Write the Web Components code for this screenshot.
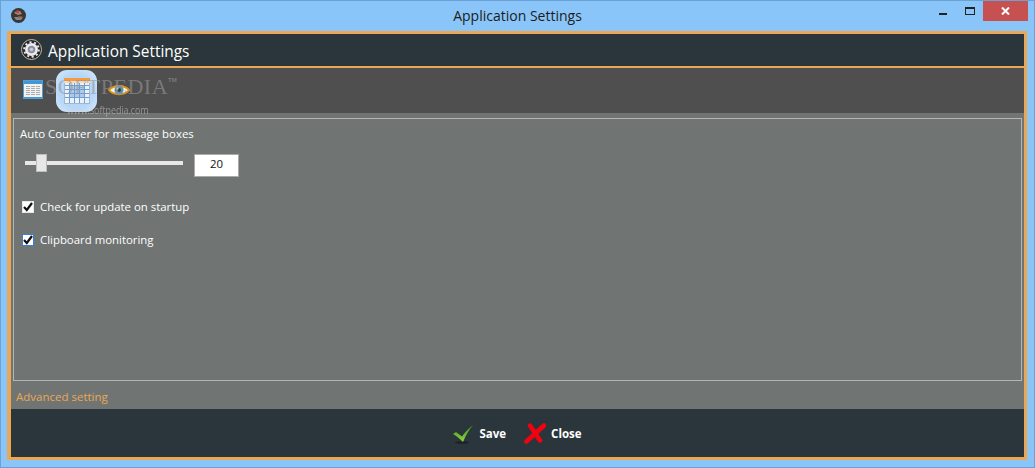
<!DOCTYPE html>
<html>
<head>
<meta charset="utf-8">
<title>Application Settings</title>
<style>
html, body { margin: 0; padding: 0; width: 1035px; height: 468px; overflow: hidden; }
body { font-family: "Open Sans", "Liberation Sans", sans-serif; }
</style>
</head>
<body>
<script>
class AppTitlebar extends HTMLElement {
    constructor() {
        super();
        this.attachShadow({ mode: "open" }).innerHTML = `
            <style>
                :host { display: grid; grid-template-columns: 1fr auto 1fr; height: 30px; color: #1c1c1c; }
                .logo { margin: 7px 0 0 10px; width: 15px; height: 15px; display: block; }
                .title { font: 14px/29px "Open Sans", "Liberation Sans", sans-serif; }
                .buttons { display: flex; align-items: flex-start; justify-content: flex-end; }
                .min { width: 8px; height: 2px; background: #222; margin: 12px 18px 0 0; }
                .max { width: 10px; height: 8px; box-sizing: border-box; border: 1px solid #222; border-top-width: 2px; margin: 6px 8px 0 0; }
                .close { width: 45px; height: 20px; background: #c75050; display: flex; justify-content: center; align-items: center; margin-right: 6px; }
            </style>
            <div>
                <svg class="logo" viewBox="0 0 15 15">
                    <circle cx="7.500" cy="7.500" r="7.500" fill="#3a3631"/>
                    <path d="M3 5L6 2.500L9 3L11 6L7 7Z" fill="#a9807a"/>
                    <rect x="5" y="3" width="3" height="2" fill="#c0453f"/>
                    <path d="M3 9H12L10 12H5Z" fill="#7a8a94"/>
                    <rect x="7" y="8" width="4" height="1.500" fill="#a8442f"/>
                </svg>
            </div>
            <div class="title"><slot></slot></div>
            <div class="buttons">
                <div class="min"></div>
                <div class="max"></div>
                <div class="close">
                    <svg width="9" height="8" viewBox="0 0 9 8"><path d="M1 .5L8 7.500M8 .5L1 7.500" stroke="#fff" stroke-width="2" fill="none"/></svg>
                </div>
            </div>
        `;
    }
}

class AppHeader extends HTMLElement {
    constructor() {
        super();
        this.attachShadow({ mode: "open" }).innerHTML = `
            <style>
                :host { display: flex; align-items: center; height: 32px; background: #2a363b; border-bottom: 2px solid #eaa854; color: #fff; padding-left: 10px; gap: 6px; font-size: 15.400px; }
                span { margin-top: 2px; }
                svg { margin-top: -1px; }
            </style>
            <svg width="21" height="21" viewBox="0 0 21 21">
                <circle cx="10.500" cy="10.500" r="10" fill="#1f2a2e" stroke="#d9b98c"/>
                <circle cx="10.500" cy="10.500" r="6.500" fill="#ecebf4"/>
                <circle cx="10.500" cy="10.500" r="7.300" fill="none" stroke="#e4e3ee" stroke-width="2" stroke-dasharray="2.100 2.490"/>
                <circle cx="10.500" cy="10.500" r="3.800" fill="#8f8f9c"/>
                <circle cx="10.500" cy="10.500" r="1.800" fill="#c9c9d4"/>
            </svg>
            <span><slot></slot></span>
        `;
    }
}

class AppToolbar extends HTMLElement {
    constructor() {
        super();
        this.attachShadow({ mode: "open" }).innerHTML = `
            <style>
                :host { display: flex; align-items: center; height: 45px; background: #4f4f4f; padding-left: 12px; position: relative; }
                svg { display: block; }
                .t1 { margin-top: -2px; }
                .t2 { width: 41px; height: 42px; margin-left: 13px; border-radius: 11px; background: radial-gradient(circle, #a9cff5 0, #b8d8f8 60%, #dcecfb 100%); display: flex; align-items: center; justify-content: center; filter: blur(.4px); }
                .t3 { margin: -2px 0 0 11px; filter: blur(.2px); }
                .mark { position: absolute; left: 34px; top: 4px; color: rgba(150,150,150,.6); font: 22px/30px "Liberation Serif", serif; letter-spacing: .5px; white-space: nowrap; }
                .tm { position: absolute; left: 157px; top: 8px; color: rgba(205,205,205,.5); font: 6px/8px "Liberation Sans", sans-serif; }
                .url { position: absolute; left: 56px; top: 36px; color: rgba(205,205,205,.55); font: 10px/12px "Open Sans", sans-serif; white-space: nowrap; transform: scaleX(.885); transform-origin: left; }
            </style>
            <svg class="t1" width="20" height="19" viewBox="0 0 20 19">
                <rect x="0.500" y="0.500" width="19" height="18" fill="#f2f2f0" stroke="#4f9fd8"/>
                <rect x="1" y="1" width="18" height="3" fill="#3f97d6"/>
                <g fill="#a9adaf">
                    <rect x="3" y="6" width="14" height="1"/><rect x="3" y="8" width="14" height="1"/>
                    <rect x="3" y="10" width="14" height="1"/><rect x="3" y="12" width="14" height="1"/><rect x="3" y="14" width="14" height="1"/>
                </g>
                <g fill="#f2f2f0"><rect x="7" y="5" width="1" height="11"/><rect x="12" y="5" width="1" height="11"/></g>
                <rect x="1" y="17" width="18" height="1" fill="#3f97d6"/>
            </svg>
            <div class="t2">
                <svg width="26" height="26" viewBox="0 0 26 26">
                    <rect x="0.500" y="0.500" width="25" height="25" fill="#eaf1f8" stroke="#9fb8d0"/>
                    <rect x="0" y="0" width="26" height="3" fill="#f79a3e"/>
                    <rect x="0" y="3" width="26" height="2" fill="#f5d9b8"/>
                    <rect x="5" y="7" width="15" height="13" fill="#5c8fd0" opacity=".4"/>
                    <g stroke="#6d9fd6" fill="none">
                        <path d="M1 7.500H25M1 11.500H25M1 15.500H25M1 19.500H25"/>
                        <path d="M5.500 5V25M10.500 5V25M15.500 5V25M20.500 5V25"/>
                    </g>
                </svg>
            </div>
            <svg class="t3" width="22" height="14" viewBox="0 0 22 14">
                <path d="M1 7C5 1.500 17 1.500 21 7C17 12.500 5 12.500 1 7Z" fill="#eef1f3" stroke="#e0920f" stroke-width="2"/>
                <circle cx="11" cy="7" r="4.500" fill="#5f8fa8"/>
                <circle cx="11" cy="7" r="2" fill="#263b46"/>
                <circle cx="9.500" cy="5.500" r="1" fill="#fff"/>
            </svg>
            <div class="mark">SOFTPEDIA</div>
            <div class="tm">TM</div>
            <div class="url">www.softpedia.com</div>
        `;
    }
}

class AppSlider extends HTMLElement {
    constructor() {
        super();
        this.attachShadow({ mode: "open" }).innerHTML = `
            <style>
                :host { display: flex; align-items: flex-start; height: 23px; gap: 11px; }
                .track { width: 158px; height: 4px; margin-top: 7px; background: #e7e7e7; position: relative; }
                .thumb { position: absolute; left: 11px; top: -7px; width: 11px; height: 18px; background: #e7e7e7; border: 1px solid #bdbdbd; box-sizing: border-box; }
                .box { width: 45px; height: 23px; box-sizing: border-box; background: #fff; border: 1px solid #a9abab; color: #111; font-size: 11.400px; line-height: 17px; text-align: center; }
            </style>
            <div class="track"><div class="thumb"></div></div>
            <div class="box"><slot></slot></div>
        `;
    }
}

class AppCheck extends HTMLElement {
    constructor() {
        super();
        this.attachShadow({ mode: "open" }).innerHTML = `
            <style>
                :host { display: flex; align-items: center; gap: 6px; height: 16px; color: #fff; font-size: 11.400px; }
                .box { width: 12px; height: 12px; background: #fff; box-sizing: border-box; border: 1px solid #e8e8e8; display: flex; }
                :host([focused]) .box { border-color: #3c7fd8; }
                span { margin-bottom: 2px; }
            </style>
            <div class="box"><svg width="10" height="10" viewBox="0 0 10 10"><path d="M1 5L3.800 8L9 1" fill="none" stroke="#111" stroke-width="2.200"/></svg></div>
            <span><slot></slot></span>
        `;
    }
}

class AppButton extends HTMLElement {
    constructor() {
        super();
        this.attachShadow({ mode: "open" }).innerHTML = `
            <style>
                :host { display: flex; align-items: center; gap: 5px; color: #fff; font-size: 11.500px; font-weight: 700; }
                .icon { display: flex; }
            </style>
            <div class="icon"><slot name="icon"></slot></div>
            <span><slot></slot></span>
        `;
    }
}

class SettingsPanel extends HTMLElement {
    constructor() {
        super();
        this.attachShadow({ mode: "open" }).innerHTML = `
            <style>
                :host { display: flex; flex-direction: column; height: 296px; box-sizing: border-box; background: #707473; padding: 5px 2px 0 2px; color: #fff; }
                .group { height: 263px; box-sizing: border-box; border: 1px solid #b4b6b6; padding: 7px 6px 0 6px; font-size: 11.400px; }
                .label { line-height: 16px; }
                .rows { display: flex; flex-direction: column; }
                .link { color: #eaa854; font-size: 11.500px; line-height: 16px; padding: 8px 0 0 3px; }
                ::slotted(app-slider) { margin: 12px 0 0 5px; }
                ::slotted(app-check) { margin: 17px 0 0 2px; }
                ::slotted(app-check:first-of-type) { margin-top: 22px; }
            </style>
            <div class="group">
                <div class="label"><slot name="label"></slot></div>
                <div class="rows"><slot></slot></div>
            </div>
            <div class="link"><slot name="link"></slot></div>
        `;
    }
}

class AppFooter extends HTMLElement {
    constructor() {
        super();
        this.attachShadow({ mode: "open" }).innerHTML = `
            <style>
                :host { display: flex; justify-content: center; align-items: center; gap: 18px; height: 48px; background: #2a363b; }
            </style>
            <slot></slot>
        `;
    }
}

class AppWindow extends HTMLElement {
    constructor() {
        super();
        this.attachShadow({ mode: "open" }).innerHTML = `
            <style>
                :host { display: block; width: 1035px; height: 468px; box-sizing: border-box; background: #8ac5f9; border: 1px solid #6ba1d4; }
                .frame { margin: 0 7px 0 6px; height: 429px; box-sizing: border-box; border: 3px solid #eaa854; border-left-width: 4px; }
            </style>
            <slot name="title"></slot>
            <div class="frame"><slot></slot></div>
        `;
    }
}

customElements.define("app-titlebar", AppTitlebar);
customElements.define("app-header", AppHeader);
customElements.define("app-toolbar", AppToolbar);
customElements.define("app-slider", AppSlider);
customElements.define("app-check", AppCheck);
customElements.define("app-button", AppButton);
customElements.define("settings-panel", SettingsPanel);
customElements.define("app-footer", AppFooter);
customElements.define("app-window", AppWindow);
</script>

<app-window>
  <app-titlebar slot="title">Application Settings</app-titlebar>
  <app-header>Application Settings</app-header>
  <app-toolbar></app-toolbar>
  <settings-panel>
    <span slot="label">Auto Counter for message boxes</span>
    <app-slider>20</app-slider>
    <app-check>Check for update on startup</app-check>
    <app-check focused>Clipboard monitoring</app-check>
    <span slot="link">Advanced setting</span>
  </settings-panel>
  <app-footer>
    <app-button>
      <svg slot="icon" width="21" height="21" viewBox="0 0 21 21">
        <defs><linearGradient id="tick" x1="0" y1="0" x2="0" y2="1"><stop offset="0" stop-color="#3d8f1c"/><stop offset="1" stop-color="#93d63e"/></linearGradient></defs>
        <ellipse cx="9" cy="19.500" rx="7" ry="1.300" fill="#1b2326"/>
        <path d="M0 11L3 9L9 13.500C12 9 16 5 20 2C16 7 13 12 10 19C7 16 4 13 0 11Z" fill="url(#tick)"/>
      </svg>
      Save
    </app-button>
    <app-button>
      <svg slot="icon" width="22" height="21" viewBox="0 0 22 21">
        <path d="M20 2.500L2.500 18.500M6 2.500L16 17.500" fill="none" stroke="#f5000f" stroke-width="4.500" stroke-linecap="round"/>
      </svg>
      Close
    </app-button>
  </app-footer>
</app-window>
</body>
</html>
